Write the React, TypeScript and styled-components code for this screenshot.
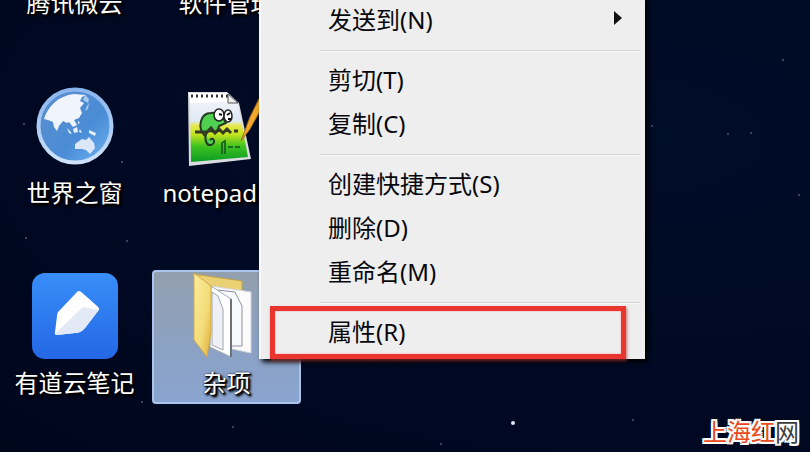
import React from "react";
import styled, { createGlobalStyle, css } from "styled-components";

const GlobalStyle = createGlobalStyle`
  * { box-sizing: border-box; }
  body {
    margin: 0;
    background: #000922;
    font-family: "Noto Sans", "Noto Sans CJK SC", sans-serif;
    font-size: 24px;
  }
`;

const Desktop = styled.main`
  position: relative;
  height: 100vh;
  overflow: hidden;
  background: radial-gradient(ellipse at 80% 30%, #000d28 0%, #000a24 50%, #00061c 100%);
`;

const Sky = styled.svg`
  position: absolute;
  inset: 0;
  width: 100%;
  height: 100%;
`;

const IconGrid = styled.div`
  position: relative;
  display: grid;
  grid-template-columns: repeat(2, 149px);
  grid-auto-rows: 134px;
  gap: 56px 3px;
  margin-top: -110px;
`;

const Shortcut = styled.button<{ $selected?: boolean }>`
  display: flex;
  flex-direction: column;
  align-items: center;
  padding: 0;
  border: 2px solid transparent;
  border-radius: 4px;
  background: none;
  color: #fff;
  font: inherit;
  ${(p) =>
    p.$selected &&
    css`
      border-color: #a9c5ee;
      background: linear-gradient(#929fae, #8ba2c6 65%, #8aa4d0);
    `}
`;

const Picture = styled.span`
  display: flex;
  align-items: center;
  justify-content: center;
  height: 88px;
  flex: none;
`;

const Label = styled.span`
  line-height: 46px;
  white-space: nowrap;
  text-shadow: 1px 1px 1px #000, 2px 2px 2px #000, 2px 2px 3px #000, 0 0 2px #000;
`;

const Menu = styled.div`
  position: absolute;
  top: -2px;
  left: 259px;
  width: 386px;
  padding-bottom: 5px;
  background: #eeeeef;
  border-left: 2px solid #f7f7f8;
  box-shadow: 3px 3px 5px #000;
`;

const MenuItem = styled.button<{ $marked?: boolean }>`
  position: relative;
  display: flex;
  align-items: center;
  justify-content: space-between;
  width: 100%;
  height: 44px;
  padding: 0 23px 4px 67px;
  border: 0;
  background: none;
  color: #08080c;
  font: inherit;
  text-align: left;
  ${(p) =>
    p.$marked &&
    css`
      &::after {
        content: "";
        position: absolute;
        inset: -4px 19px -5px 9px;
        border: 5px solid #e8362f;
        box-shadow: 1px 2px 3px #a33a, inset 0 0 2px #f99;
      }
    `}
`;

const Separator = styled.hr`
  height: 2px;
  margin: 8px 5px 6px 59px;
  border: 0;
  border-top: 1px solid #d3d3d5;
  border-bottom: 1px solid #fafafa;
`;

const Watermark = styled.div`
  position: absolute;
  right: 11px;
  bottom: 4px;
  line-height: 32px;
  color: #e84a1c;
  text-shadow: 2px 0 #fff, -2px 0 #fff, 0 2px #fff, 0 -2px #fff,
    2px 2px #fff, -2px -2px #fff, 2px -2px #fff, -2px 2px #fff,
    1px 0 #fff, -1px 0 #fff, 0 1px #fff, 0 -1px #fff;
`;

const Dark = styled.span`
  color: #3d3d3d;
`;

const stars = [
  [652, 126, 1], [783, 60, 1], [728, 134, 1], [751, 133, 1], [799, 195, 1],
  [513, 423, 2], [122, 162, 1], [24, 124, 1], [26, 238, 1], [127, 241, 1],
  [142, 402, 1], [233, 427, 1], [633, 420, 1], [441, 444, 1],
];

function Globe() {
  return (
    <svg width="80" height="80" viewBox="0 0 80 80" aria-hidden="true">
      <defs>
        <linearGradient id="sea" x1="0" y1="0" x2="1" y2="1">
          <stop offset="0" stopColor="#5d8fcd" />
          <stop offset=".6" stopColor="#4a8cd6" />
          <stop offset="1" stopColor="#70b6f2" />
        </linearGradient>
        <linearGradient id="rim" x1="0" y1="0" x2="0" y2="1">
          <stop offset="0" stopColor="#89b5ee" />
          <stop offset="1" stopColor="#cfe2fa" />
        </linearGradient>
      </defs>
      <circle cx="40" cy="40" r="36.5" fill="url(#sea)" stroke="url(#rim)" strokeWidth="4" />
      <path d="M9 33 C13 20 23 10 39 8 L51 9 L47 11 L45 15 L49 17 L45 22 L47 27 L44 32 L39 34 L42 39 L38 41 L34 36 L32 37 L28 35 L24 40 L22 45 L19 41 L18 36 L13 34Z" fill="#f0f5fd" />
      <path d="M50 9 L54 13 L53 17 L48 14Z M54 17 L53 23 L50 25 L52 20Z" fill="#a9c9f0" />
      <path d="M32 42 L35 45 L37 48 L34 47Z M38 43 L42 41 L43 46 L39 47Z M45 43 L47 47 L44 46Z M43 35 L45 37 L43 38Z M54 44 L61 47 L60 50 L54 47Z" fill="#e6effb" />
      <path d="M40 58 L47 53 L51 54 L54 51 L59 57 L60 62 L55 68 L51 64 L47 63 L40 63Z" fill="#dbe7f7" />
    </svg>
  );
}

function Notepad() {
  return (
    <svg width="90" height="80" viewBox="0 0 90 80" aria-hidden="true">
      <defs>
        <linearGradient id="paper" x1="0" y1="0" x2="0" y2="1">
          <stop offset="0" stopColor="#f4f6fa" />
          <stop offset=".38" stopColor="#dde9f5" />
          <stop offset=".45" stopColor="#e8e84c" />
          <stop offset=".58" stopColor="#c5e31e" />
          <stop offset=".76" stopColor="#3ec31f" />
          <stop offset="1" stopColor="#0c9a24" />
        </linearGradient>
      </defs>
      <path d="M6 6 L45 6 L57 17 L69 73 L7 80Z" fill="#d9dce0" />
      <path d="M8 10 L45 10 L56 18 L66 71 L9 76Z" fill="url(#paper)" />
      <path d="M7 7 L46 7 L46 16 L8 17Z" fill="#fff" />
      <path d="M9 10 H46" stroke="#333" strokeWidth="3" strokeDasharray="2 3" />
      <path d="M46 8 V17 H56Z" fill="#eee" stroke="#555" />
      <path d="M23 50 C15 42 18 27 29 27 C36 26 42 31 44 37 L37 40 L35 46 L26 45 C21 51 24 60 29 59 C35 57 31 50 28 54" fill="#4fd050" stroke="#243a22" strokeWidth="2" />
      <path d="M13 46 H25 L29 42 L33 47 L37 43 L41 47 L45 43 L49 47 M52 45 H56" fill="none" stroke="#333b24" strokeWidth="3" />
      <ellipse cx="37" cy="29" rx="5" ry="6" fill="#fff" stroke="#222" strokeWidth="1.5" />
      <ellipse cx="46" cy="30" rx="4" ry="6" fill="#fff" stroke="#222" strokeWidth="1.5" />
      <path d="M37 28 L40 29 M45 29 L48 27 M46 33 L49 33" stroke="#111" strokeWidth="2" />
      <path d="M40 68 V57 L43 55 V68 M46 61 H51 M53 61 H58" fill="none" stroke="#1d6b1c" strokeWidth="2" />
      <path d="M59 55 L68 31 L78 11 L84 14 L68 43Z" fill="#f2a92c" stroke="#a76a16" />
    </svg>
  );
}

function Note() {
  return (
    <svg width="86" height="86" viewBox="0 0 86 86" aria-hidden="true">
      <defs>
        <linearGradient id="tile" x1="0" y1="0" x2="0" y2="1">
          <stop offset="0" stopColor="#388ef8" />
          <stop offset="1" stopColor="#2467e5" />
        </linearGradient>
      </defs>
      <rect width="86" height="86" rx="13" fill="url(#tile)" />
      <path d="M45 19 Q47 17 49 19 L66 34 Q68 36 66 38 L53 55 Q49 60 43 60 L25 62 Q22 62 23 59 L25 43 Q25 39 28 37Z" fill="#fff" />
      <path d="M51 34 L66 35 Q68 36 66 38 L53 55 Q49 60 43 60 L25 62 Q23 62 24 60Z" fill="#e3e9f6" />
      <path d="M51 34 L49 19 L66 34 L67 37Z" fill="#fff" />
    </svg>
  );
}

function Folder() {
  return (
    <svg width="70" height="88" viewBox="0 0 70 88" aria-hidden="true">
      <defs>
        <linearGradient id="cover" x1="0" y1="0" x2="1" y2="1">
          <stop offset="0" stopColor="#fbec9b" />
          <stop offset=".6" stopColor="#f3db78" />
          <stop offset="1" stopColor="#dfab32" />
        </linearGradient>
      </defs>
      <path d="M1 2 L50 9 V60 L18 70Z" fill="#ead174" stroke="#c5a445" />
      <path d="M19 14 L59 20 V81 L31 75Z" fill="#fbfbfc" stroke="#d4d6dc" />
      <path d="M26 18 L43 20 L50 34 V74 H38" fill="#f8f9fb" stroke="#8d929c" />
      <path d="M19 14 L39 27 V85 L18 75Z" fill="#fff" stroke="#a5aab3" />
      <path d="M20 20 L26 24 L31 37 V78 L20 73Z" fill="#eef0f5" stroke="#a2a6af" />
      <path d="M39 27 V85" stroke="#6b707a" strokeWidth="2" />
      <path d="M2 1 L19 14 V60 L15 85 L2 68Z" fill="url(#cover)" stroke="#d0ac4a" />
    </svg>
  );
}

export default function App() {
  return (
    <Desktop>
      <GlobalStyle />
      <Sky aria-hidden="true">
        {stars.map(([x, y, r]) => (
          <circle key={`${x}-${y}`} cx={x} cy={y} r={r} fill={r > 1 ? "#dfe7f5" : "#45577c"} />
        ))}
      </Sky>
      <IconGrid>
        <Shortcut><Picture /><Label>腾讯微云</Label></Shortcut>
        <Shortcut><Picture /><Label>软件管理</Label></Shortcut>
        <Shortcut><Picture><Globe /></Picture><Label>世界之窗</Label></Shortcut>
        <Shortcut><Picture><Notepad /></Picture><Label>notepad ++</Label></Shortcut>
        <Shortcut><Picture><Note /></Picture><Label>有道云笔记</Label></Shortcut>
        <Shortcut $selected><Picture><Folder /></Picture><Label>杂项</Label></Shortcut>
      </IconGrid>
      <Menu role="menu">
        <MenuItem role="menuitem">
          发送到(N)
          <svg width="8" height="14" viewBox="0 0 8 14" aria-hidden="true">
            <path d="M0 0 L8 7 L0 14Z" fill="#111" />
          </svg>
        </MenuItem>
        <Separator />
        <MenuItem role="menuitem">剪切(T)</MenuItem>
        <MenuItem role="menuitem">复制(C)</MenuItem>
        <Separator />
        <MenuItem role="menuitem">创建快捷方式(S)</MenuItem>
        <MenuItem role="menuitem">删除(D)</MenuItem>
        <MenuItem role="menuitem">重命名(M)</MenuItem>
        <Separator />
        <MenuItem role="menuitem" $marked>属性(R)</MenuItem>
      </Menu>
      <Watermark>上海红<Dark>网</Dark></Watermark>
    </Desktop>
  );
}
